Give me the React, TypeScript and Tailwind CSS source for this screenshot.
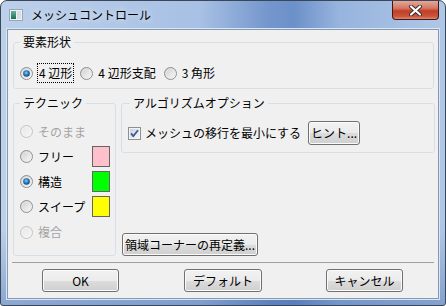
import React from "react";

function Radio({ checked = false, disabled = false, id }: { checked?: boolean; disabled?: boolean; id: string }) {
  return (
    <svg width="13" height="13" viewBox="0 0 13 13" className="shrink-0">
      <defs>
        <linearGradient id={id + "-f"} x1="0" y1="0" x2="1" y2="1">
          <stop offset="0" stopColor={disabled ? "#e6e6e6" : "#c9c9c9"} />
          <stop offset="1" stopColor={disabled ? "#f7f7f7" : "#ffffff"} />
        </linearGradient>
        <radialGradient id={id + "-d"} cx="0.45" cy="0.4" r="0.6">
          <stop offset="0" stopColor="#8fd6fb" />
          <stop offset="0.45" stopColor="#2a8ad0" />
          <stop offset="1" stopColor="#173f6b" />
        </radialGradient>
      </defs>
      <circle cx="6.5" cy="6.5" r="6" fill={`url(#${id}-f)`} stroke={disabled ? "#c4c4c4" : "#8e8f8f"} />
      <circle cx="6.5" cy="6.5" r="4.3" fill="none" stroke={disabled ? "#f2f2f2" : "#e8e8e8"} strokeWidth="0.8" />
      {checked && <circle cx="6.5" cy="6.5" r="3.3" fill={`url(#${id}-d)`} />}
    </svg>
  );
}

function CheckBox() {
  return (
    <svg width="13" height="13" viewBox="0 0 13 13" className="shrink-0">
      <defs>
        <linearGradient id="cb-f" x1="0" y1="0" x2="1" y2="1">
          <stop offset="0" stopColor="#cbd3de" />
          <stop offset="1" stopColor="#f4f6f9" />
        </linearGradient>
      </defs>
      <rect x="0.5" y="0.5" width="12" height="12" fill="#f4f4f4" stroke="#8e8f8f" />
      <rect x="2" y="2" width="9" height="9" fill="url(#cb-f)" />
      <path d="M3 6.3 L5.3 9 L10 3.3" fill="none" stroke="#3f5895" strokeWidth="1.8" />
    </svg>
  );
}

function Btn({ children, className = "" }: { children: React.ReactNode; className?: string }) {
  return (
    <div
      className={
        "flex items-center justify-center rounded-[3px] border border-[#707070] text-[12px] leading-none text-black shadow-[inset_0_0_0_1px_#fbfbfb] bg-[linear-gradient(180deg,#f2f2f2_0%,#ebebeb_50%,#dddddd_50%,#cfcfcf_100%)] " +
        className
      }
    >
      {children}
    </div>
  );
}

function Swatch({ color }: { color: string }) {
  return <div className={"ml-auto w-[18px] h-[21px] border border-[#646464] " + color} />;
}

export default function App() {
  return (
    <div className="w-[446px] h-[306px] relative flex flex-col rounded-t-[7px] rounded-b-[3px] border border-[#3b4656] bg-[linear-gradient(180deg,rgba(50,90,160,0)_0%,rgba(50,90,160,0)_75%,rgba(50,90,160,0.35)_100%),linear-gradient(90deg,#bcd0ea_0%,#a7c0e4_45%,#7597cd_60%,#6c90c9_66%,#97b4de_76%,#b0c7e6_100%)] font-['Noto_Sans_CJK_JP',sans-serif] text-black overflow-hidden">
      {/* title bar */}
      <div className="h-[28px] flex items-center pl-[8px]">
        <svg width="14" height="12" viewBox="0 0 14 12">
          <defs>
            <linearGradient id="ic" x1="0" y1="0" x2="0" y2="1">
              <stop offset="0" stopColor="#5fb59a" />
              <stop offset="1" stopColor="#1f6b5a" />
            </linearGradient>
          </defs>
          <rect x="0.5" y="0.5" width="13" height="11" fill="#eef1f4" stroke="#9aa6b2" />
          <rect x="2" y="2" width="5" height="8" fill="url(#ic)" />
          <rect x="8" y="2" width="4" height="8" fill="#d8dde3" />
        </svg>
        <span className="ml-[8px] text-[12px] leading-none text-black [text-shadow:0_0_6px_#ffffff]">
          メッシュコントロール
        </span>
      </div>
      <div className="absolute top-0 right-[6px] w-[47px] h-[19px] rounded-b-[4px] border border-t-0 border-[#3f1a14] bg-[linear-gradient(180deg,#e3a898_0%,#d47763_40%,#c23f27_55%,#c9543b_85%,#df8a72_100%)] flex items-center justify-center">
        <svg width="13" height="11" viewBox="0 0 13 11">
          <path d="M2 1.5 L11 9.5 M11 1.5 L2 9.5" stroke="#3a2a2a" strokeWidth="4" strokeLinecap="round" />
          <path d="M2 1.5 L11 9.5 M11 1.5 L2 9.5" stroke="#ffffff" strokeWidth="2.2" strokeLinecap="round" />
        </svg>
      </div>

      {/* client area */}
      <div className="mx-[6px] h-[270px] border border-[#8499b3] shadow-[0_0_0_1px_#dbe6f4] bg-[#f0f0f0] flex flex-col pt-[4px] text-[12px] leading-[16px]">
        <fieldset className="ml-[5px] w-[421px] h-[55px] border border-[#d5dfe5] rounded-[3px]">
          <legend className="ml-[6px] px-[3px]">要素形状</legend>
          <div className="flex items-center pl-[6px] mt-[13px]">
            <Radio id="r1" checked />
            <span className="ml-[4px] px-[1px] border border-dotted border-black leading-[18px]">4 辺形</span>
            <span className="ml-[6px]">
              <Radio id="r2" />
            </span>
            <span className="ml-[5px]">4 辺形支配</span>
            <span className="ml-[8px]">
              <Radio id="r3" />
            </span>
            <span className="ml-[5px]">3 角形</span>
          </div>
        </fieldset>

        <div className="flex mt-[6px] ml-[5px] h-[161px]">
          <fieldset className="w-[103px] h-[161px] border border-[#d5dfe5] rounded-[3px]">
            <legend className="ml-[6px] px-[3px]">テクニック</legend>
            <div className="flex flex-col pt-[8px] pl-[6px] pr-[5px]">
              <div className="h-[25px] flex items-center text-[#a3a3a3]">
                <Radio id="t1" disabled />
                <span className="ml-[5px]">そのまま</span>
              </div>
              <div className="h-[25px] flex items-center">
                <Radio id="t2" />
                <span className="ml-[5px]">フリー</span>
                <Swatch color="bg-[#ffc0cb]" />
              </div>
              <div className="h-[25px] flex items-center">
                <Radio id="t3" checked />
                <span className="ml-[5px]">構造</span>
                <Swatch color="bg-[#00ff00]" />
              </div>
              <div className="h-[25px] flex items-center">
                <Radio id="t4" />
                <span className="ml-[5px]">スイープ</span>
                <Swatch color="bg-[#ffff00]" />
              </div>
              <div className="h-[26px] flex items-center text-[#a3a3a3]">
                <Radio id="t5" disabled />
                <span className="ml-[5px]">複合</span>
              </div>
            </div>
          </fieldset>

          <div className="ml-[5px] w-[314px] flex flex-col">
            <fieldset className="w-[314px] h-[58px] border border-[#d5dfe5] rounded-[3px]">
              <legend className="ml-[8px] px-[3px]">アルゴリズムオプション</legend>
              <div className="flex items-center pl-[6px] mt-[10px] h-[24px]">
                <CheckBox />
                <span className="ml-[4px]">メッシュの移行を最小にする</span>
                <Btn className="ml-[7px] w-[52px] h-[24px]">ヒント...</Btn>
              </div>
            </fieldset>
            <Btn className="mt-auto ml-[1px] w-[136px] h-[23px]">領域コーナーの再定義...</Btn>
          </div>
        </div>

        <div className="mt-[6px] mx-[4px] h-px bg-[#a0a0a0]" />

        <div className="flex mt-[6px]">
          <Btn className="ml-[34px] w-[77px] h-[23px]">OK</Btn>
          <Btn className="ml-[65px] w-[78px] h-[23px]">デフォルト</Btn>
          <Btn className="ml-[64px] w-[77px] h-[23px]">キャンセル</Btn>
        </div>
      </div>
    </div>
  );
}
